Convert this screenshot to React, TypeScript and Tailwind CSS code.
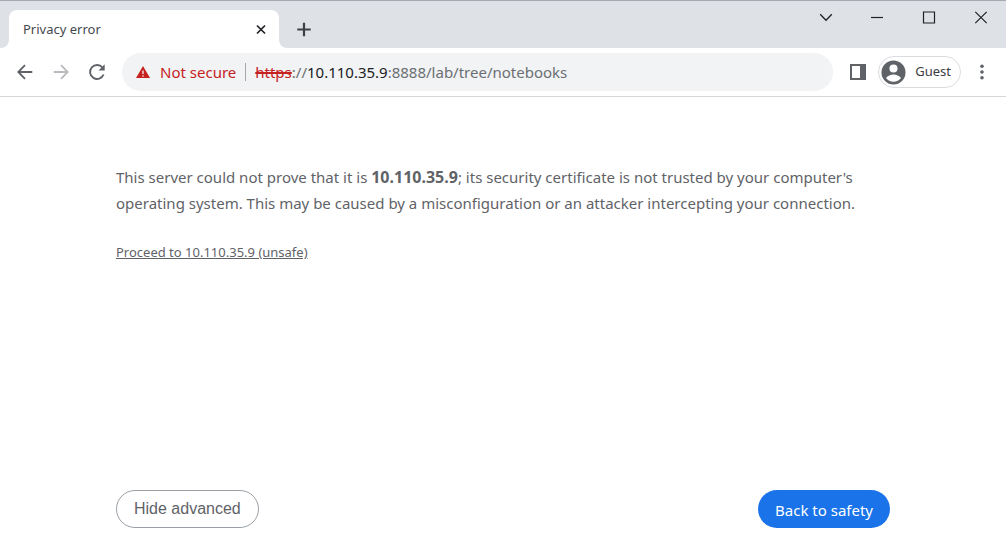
import React from "react";

function TabStrip() {
  return (
    <header className="flex h-12 items-stretch border-t border-[#a5a8b0] bg-[#dee1e6] pl-[9px] text-[#202124]">
      <div className="relative mt-[9px] flex w-[270px] items-center justify-between rounded-t-lg bg-white pr-3 pl-[14px]">
        <svg className="absolute bottom-0 -left-2 size-2" viewBox="0 0 8 8" aria-hidden="true">
          <path d="M8 0v8H0a8 8 0 0 0 8-8z" fill="#fff" />
        </svg>
        <span className="pt-0.5 text-[13px] text-[#45494d]">Privacy error</span>
        <button type="button" aria-label="Close tab" className="flex size-3 items-center justify-center">
          <svg className="size-3" viewBox="0 0 12 12" fill="none" stroke="currentColor" strokeWidth="1.7" aria-hidden="true">
            <path d="M2 2.500l8 8M10 2.500l-8 8" />
          </svg>
        </button>
        <svg className="absolute -right-2 bottom-0 size-2" viewBox="0 0 8 8" aria-hidden="true">
          <path d="M0 0v8h8a8 8 0 0 1-8-8z" fill="#fff" />
        </svg>
      </div>
      <button type="button" aria-label="New tab" className="ml-[17px] flex w-4 items-center justify-center pt-[9px] text-[#3c4043]">
        <svg className="size-4 shrink-0" viewBox="0 0 16 16" fill="none" stroke="currentColor" strokeWidth="2.200" aria-hidden="true">
          <path d="M8 1.800v13.400M1.300 8.500h13.400" />
        </svg>
      </button>
      <div className="ml-auto flex h-8">
        <button type="button" aria-label="Search tabs" className="flex w-[51px] items-center justify-center">
          <svg className="size-4" viewBox="0 0 16 16" fill="none" stroke="currentColor" strokeWidth="1.3" aria-hidden="true">
            <path d="M2.2 5.3L8 11.2l5.800-5.900" />
          </svg>
        </button>
        <button type="button" aria-label="Minimize" className="flex w-[52px] items-center justify-center">
          <svg className="size-4" viewBox="0 0 16 16" fill="none" stroke="currentColor" strokeWidth="1.2" aria-hidden="true">
            <path d="M2 8.500h12" />
          </svg>
        </button>
        <button type="button" aria-label="Maximize" className="flex w-[52px] items-center justify-center">
          <svg className="size-4" viewBox="0 0 16 16" fill="none" stroke="currentColor" strokeWidth="1.2" aria-hidden="true">
            <path d="M2.500 3h11v11h-11z" />
          </svg>
        </button>
        <button type="button" aria-label="Close window" className="flex w-[51px] items-center justify-center">
          <svg className="size-4" viewBox="0 0 16 16" fill="none" stroke="currentColor" strokeWidth="1.2" aria-hidden="true">
            <path d="M2.300 2.800l11.400 11.400M13.700 2.800L2.300 14.200" />
          </svg>
        </button>
      </div>
    </header>
  );
}

function Toolbar() {
  return (
    <nav aria-label="Toolbar" className="flex h-[49px] items-center border-b border-[#d5d7da] bg-white pr-4 pl-4 text-[#5f6368]">
      <div className="flex gap-[18px]">
        <button type="button" aria-label="Back" className="size-[18px]">
          <svg viewBox="0 0 18 18" fill="none" stroke="currentColor" strokeWidth="1.8" aria-hidden="true">
            <path d="M16.300 9H2.500M9 2.200L2.300 9 9 15.800" />
          </svg>
        </button>
        <button type="button" aria-label="Forward" disabled className="size-[18px] text-[#b9bbbe]">
          <svg viewBox="0 0 18 18" fill="none" stroke="currentColor" strokeWidth="1.8" aria-hidden="true">
            <path d="M1.700 9h13.800M9 2.200L15.700 9 9 15.800" />
          </svg>
        </button>
        <button type="button" aria-label="Reload" className="size-[18px]">
          <svg viewBox="0 0 18 18" aria-hidden="true">
            <path d="M14.500 4.500A7 7 0 1 0 15.600 11.500" fill="none" stroke="currentColor" strokeWidth="1.900" />
            <path d="M16.700 1.300v6.200h-6.200z" fill="currentColor" />
          </svg>
        </button>
      </div>
      <div className="ml-4 flex h-[38px] min-w-0 flex-1 items-center rounded-full bg-[#f1f3f4] pl-[13px] text-[15px]">
        <button type="button" className="flex items-center gap-[9px] whitespace-nowrap text-[#c5221f]">
          <svg className="h-3.5 w-4" viewBox="0 0 16 14" aria-hidden="true">
            <path d="M8 1l7 12H1z" fill="currentColor" />
            <path d="M8 5.500v3.500M8 10.200v1.500" stroke="#f1f3f4" strokeWidth="1.300" />
          </svg>
          Not secure
        </button>
        <span className="mx-[9px] h-[18px] w-px bg-[#a5a8ac]" />
        <div
          role="textbox"
          aria-label="Address"
          contentEditable
          suppressContentEditableWarning
          spellCheck={false}
          className="min-w-0 flex-1 overflow-hidden whitespace-nowrap text-[#6b6f73] outline-none"
        >
          <s className="text-[#c5221f] decoration-2">https</s>://<span className="text-[#202124]">10.110.35.9</span>:8888/lab/tree/notebooks
        </div>
      </div>
      <button type="button" aria-label="Side panel" className="ml-[17px] size-4">
        <svg viewBox="0 0 16 16" aria-hidden="true">
          <path fillRule="evenodd" d="M0 0h16v16H0zM2 2v12h8V2z" fill="currentColor" />
        </svg>
      </button>
      <button type="button" className="ml-3 flex h-8 items-center gap-[9px] rounded-full border border-[#dadce0] pr-[9px] pl-[2px] text-[13px] text-[#3c4043]">
        <svg className="size-[25px]" viewBox="0 0 26 26" aria-hidden="true">
          <circle cx="13" cy="13" r="12.500" fill="#5f6368" />
          <circle cx="13" cy="8.800" r="4.200" fill="#fff" />
          <path d="M5.200 18.800c1.600-2.300 5-3.600 7.800-3.600s6.200 1.300 7.800 3.600c-1.700 2.500-4.600 3.900-7.800 3.900s-6.100-1.400-7.800-3.900z" fill="#fff" />
        </svg>
        Guest
      </button>
      <button type="button" aria-label="Menu" className="ml-[13px] h-4 w-4">
        <svg viewBox="0 0 16 16" fill="currentColor" aria-hidden="true">
          <circle cx="8" cy="2.200" r="1.800" />
          <circle cx="8" cy="8" r="1.800" />
          <circle cx="8" cy="13.800" r="1.800" />
        </svg>
      </button>
    </nav>
  );
}

export default function App() {
  return (
    <div className="flex min-h-screen flex-col bg-white font-['Noto_Sans','Open_Sans',sans-serif]">
      <TabStrip />
      <Toolbar />
      <main className="flex flex-1 flex-col px-[116px] pt-[67px] pb-6 text-[#5f6368]">
        <p className="text-[15px] leading-[26px]">
          This server could not prove that it is <strong className="text-base leading-none">10.110.35.9</strong>; its security
          certificate is not trusted by your computer&apos;s operating system. This may be caused by a misconfiguration or an
          attacker intercepting your connection.
        </p>
        <a href="#proceed" className="mt-6 self-start text-[13px] leading-6 underline">
          Proceed to 10.110.35.9 (unsafe)
        </a>
        <div className="mt-auto flex justify-between">
          <button type="button" className="h-[38px] rounded-full border border-[#9aa0a6] px-[17px] font-['Liberation_Sans',Arial,sans-serif] text-base">
            Hide advanced
          </button>
          <button type="button" className="h-[38px] rounded-full bg-[#1a73e8] px-[17px] pt-0.5 text-[15px] text-white">
            Back to safety
          </button>
        </div>
      </main>
    </div>
  );
}
